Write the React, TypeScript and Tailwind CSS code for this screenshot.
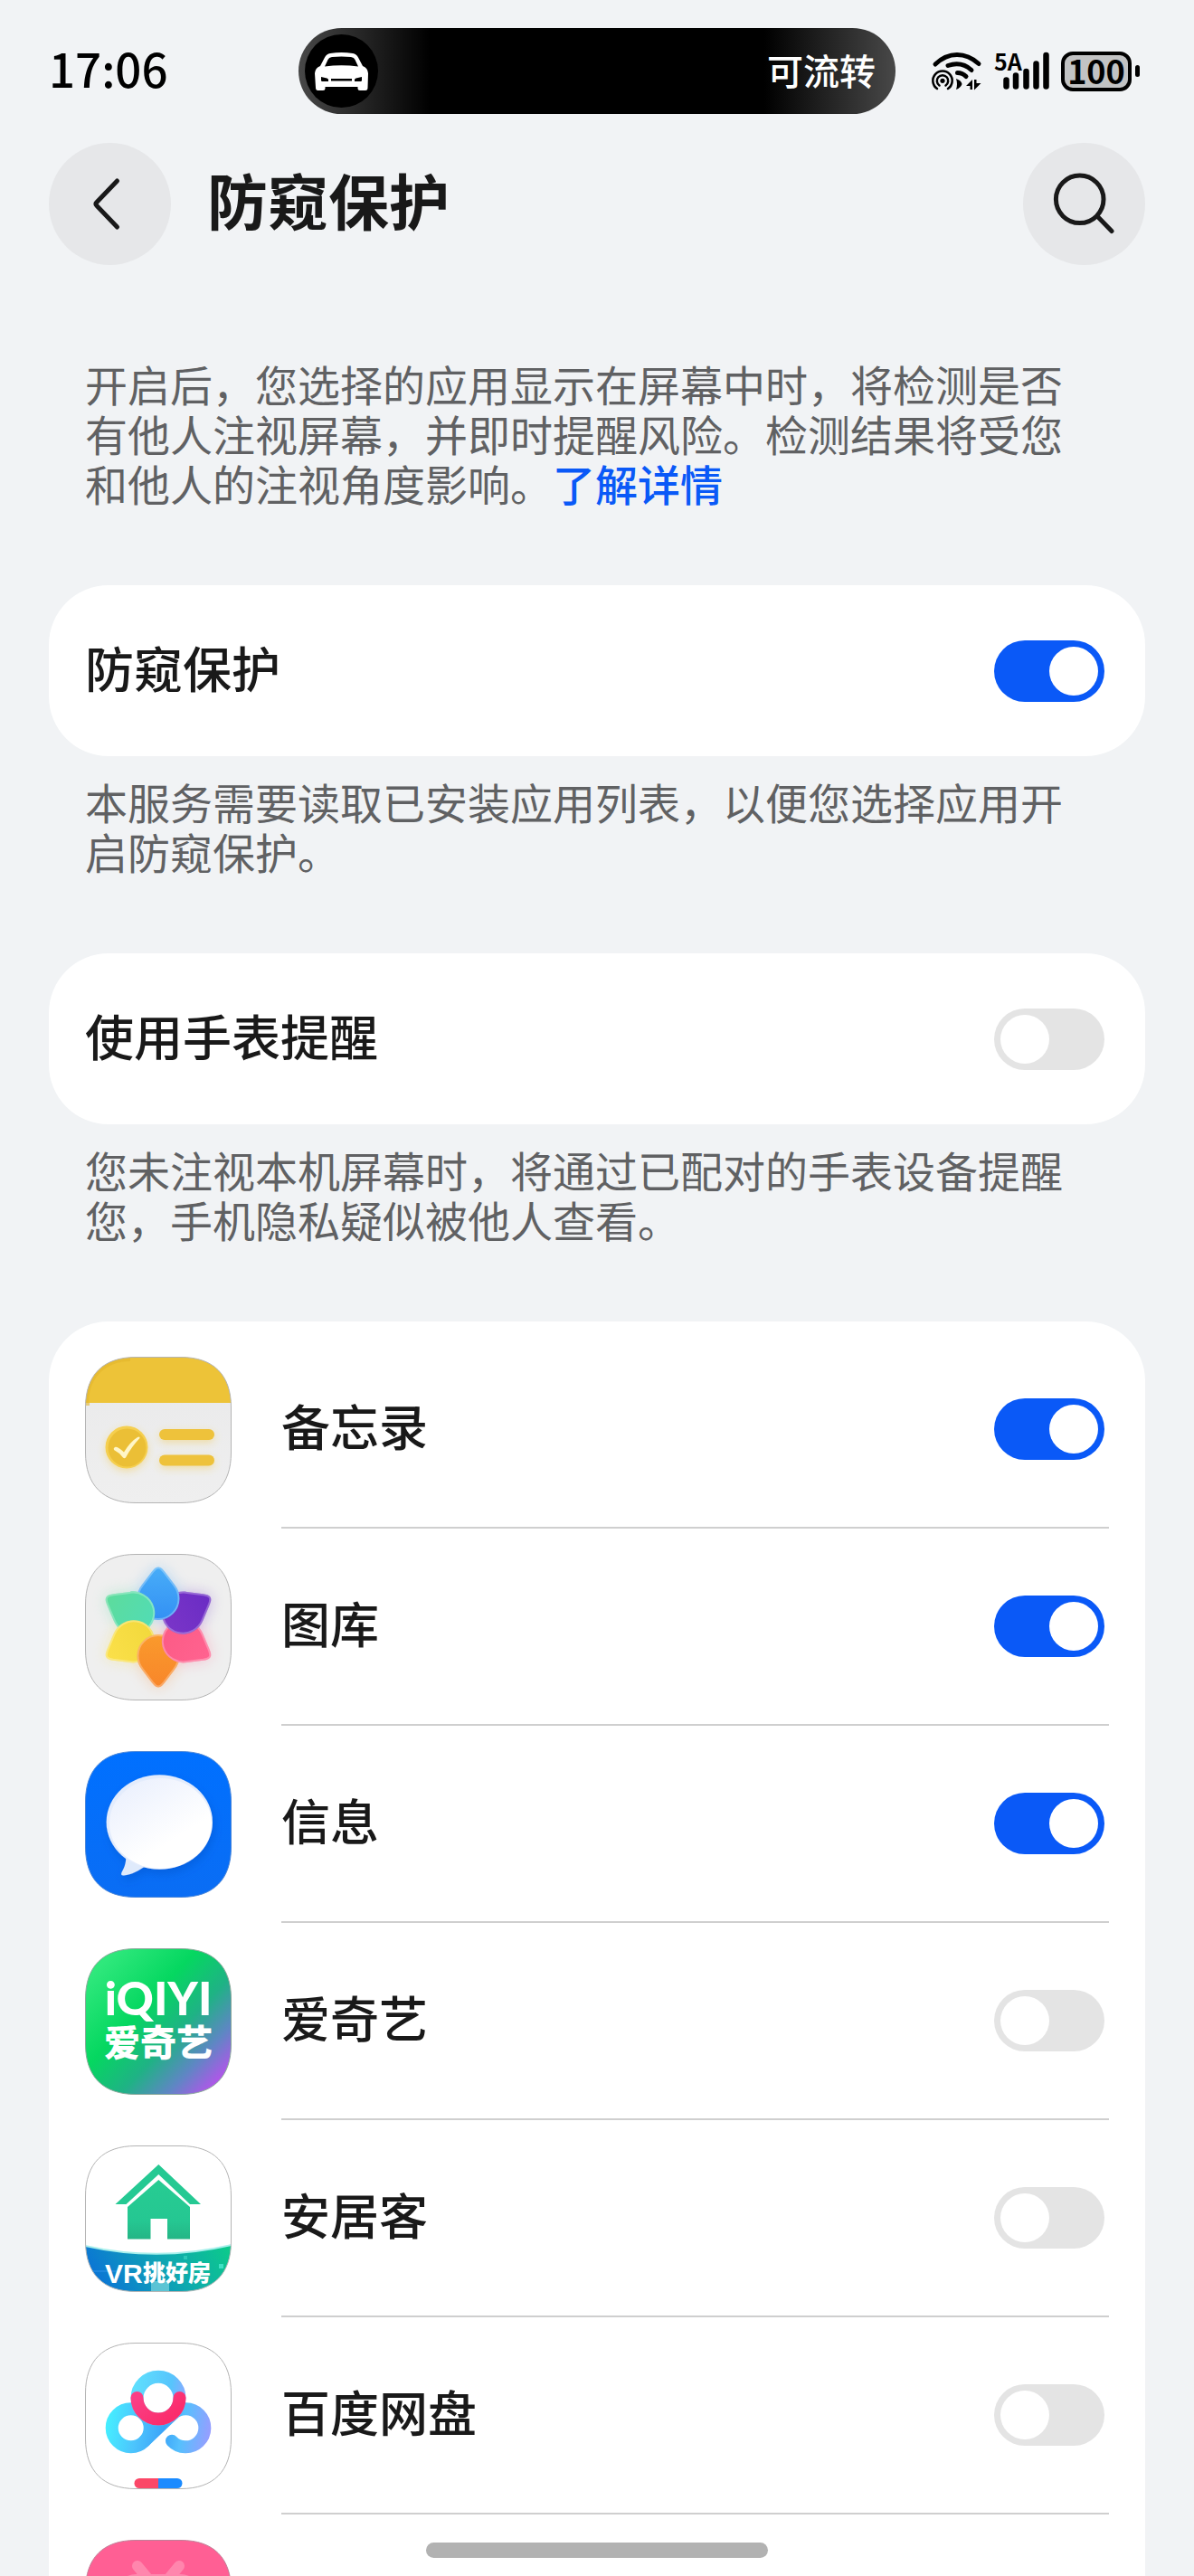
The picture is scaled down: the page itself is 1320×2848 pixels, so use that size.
import { useId, useState, type ReactNode } from "react";

const SQUIRCLE =
  "M0.5 56 C0.5 20 20 0.5 56 0.5 H106 C142 0.5 161.5 20 161.5 56 V106 C161.5 142 142 161.5 106 161.5 H56 C20 161.5 0.5 142 0.5 106 Z";
const PETAL =
  "M81 14.5 C84 14.5 86 17 88 19.5 L99 34 C103 39 104.5 44 104.5 49.5 A23.5 23.5 0 0 1 57.5 49.5 C57.5 44 59 39 63 34 L74 19.5 C76 17 78 14.5 81 14.5 Z";

function Tile({ children, edge = "#b4b4b4" }: { children: ReactNode; edge?: string }) {
  const id = useId();
  return (
    <svg viewBox="0 0 162 162" className="size-[162px] shrink-0" aria-hidden="true">
      <clipPath id={id}>
        <path d={SQUIRCLE} />
      </clipPath>
      <g clipPath={`url(#${id})`}>{children}</g>
      <path d={SQUIRCLE} fill="none" stroke={edge} />
    </svg>
  );
}

function NotesIcon() {
  return (
    <Tile>
      <defs>
        <linearGradient id="notes-paper" x1="0" y1="0" x2="0" y2="1">
          <stop offset="0" stopColor="#e9e9ea" />
          <stop offset="1" stopColor="#efefef" />
        </linearGradient>
        <filter id="notes-glow" x="-30%" y="-30%" width="160%" height="170%">
          <feDropShadow dx="0" dy="3" stdDeviation="4" floodColor="#f2c53a" floodOpacity="0.4" />
        </filter>
      </defs>
      <rect width="162" height="162" fill="url(#notes-paper)" />
      <rect width="162" height="51" fill="#edc338" />
      <path d="M3 51 V54 M2 51 C2 22 22 3 50 3" fill="none" stroke="#e3b52c" strokeWidth="4" opacity="0.6" />
      <g filter="url(#notes-glow)">
        <circle cx="46" cy="100" r="23.5" fill="#f5cf4f" />
        <rect x="82" y="80" width="61" height="12" rx="6" fill="#eec23a" />
        <rect x="82" y="108.500" width="61" height="12" rx="6" fill="#eec23a" />
      </g>
      <circle cx="46.500" cy="100.500" r="21" fill="#ebbf36" />
      <path d="M33 100 Q36 99 43 105.500 Q50 94 58 89 Q61 87.500 60.500 90 Q51 100 45 111.500 Q43.500 113 42 111.500 Q38 106 32 103 Q31 101 33 100 Z" fill="#fff6c8" />
    </Tile>
  );
}

const petals = [
  { id: "green", turn: 300, from: "#5ddc9c", to: "#52dcb4" },
  { id: "yellow", turn: 240, from: "#fbe04a", to: "#f2d93c" },
  { id: "orange", turn: 180, from: "#f8862a", to: "#fa9a2c" },
  { id: "pink", turn: 120, from: "#ff6390", to: "#fc5b86" },
  { id: "purple", turn: 60, from: "#6a2cc4", to: "#7a35c8" },
  { id: "blue", turn: 0, from: "#48adf8", to: "#3390f4" },
];

function Petal({ id, turn }: { id: string; turn: number }) {
  return (
    <g transform={`rotate(${turn} 81 81)`}>
      <path d={PETAL} fill={`url(#petal-${id})`} />
      <path d={PETAL} fill="none" stroke="#fff" strokeOpacity="0.28" strokeWidth="4" clipPath="url(#petal-clip)" />
    </g>
  );
}

function GalleryIcon() {
  return (
    <Tile>
      <defs>
        {petals.map((p) => (
          <linearGradient key={p.id} id={`petal-${p.id}`} x1="0" y1="0" x2="0" y2="1">
            <stop offset="0" stopColor={p.from} />
            <stop offset="1" stopColor={p.to} />
          </linearGradient>
        ))}
        <clipPath id="petal-clip">
          <path d={PETAL} />
        </clipPath>
        <clipPath id="petal-front">
          <rect x="50" y="30" width="45" height="43" />
        </clipPath>
        <filter id="petal-haze" x="-30%" y="-30%" width="160%" height="160%">
          <feGaussianBlur stdDeviation="8" />
        </filter>
      </defs>
      <rect width="162" height="162" fill="#efefef" />
      <g filter="url(#petal-haze)" opacity="0.35">
        {petals.map((p) => (
          <Petal key={p.id} id={p.id} turn={p.turn} />
        ))}
      </g>
      {petals.map((p) => (
        <Petal key={p.id} id={p.id} turn={p.turn} />
      ))}
      <g clipPath="url(#petal-front)">
        <Petal id="green" turn={300} />
      </g>
    </Tile>
  );
}

function MessagesIcon() {
  return (
    <Tile edge="#4a86d8">
      <defs>
        <linearGradient id="msg-bg" x1="0" y1="0" x2="0" y2="1">
          <stop offset="0" stopColor="#0070ff" />
          <stop offset="1" stopColor="#0a6df4" />
        </linearGradient>
        <linearGradient id="msg-bubble" x1="0.1" y1="0" x2="0.6" y2="0.7">
          <stop offset="0" stopColor="#e9effd" />
          <stop offset="1" stopColor="#fff" />
        </linearGradient>
        <filter id="msg-shadow" x="-20%" y="-20%" width="140%" height="150%">
          <feDropShadow dx="2" dy="5" stdDeviation="5" floodColor="#0a4fc0" floodOpacity="0.4" />
        </filter>
      </defs>
      <rect width="162" height="162" fill="url(#msg-bg)" />
      <g filter="url(#msg-shadow)">
        <path d="M45 114 C46 122 44 128 40.500 134 Q39 138 43 137.500 C51 137 60 132 68 126 Z" fill="#dfeafb" />
        <ellipse cx="82.300" cy="78.500" rx="58.700" ry="52.200" fill="#e3ecfc" />
      </g>
      <ellipse cx="83.500" cy="80" rx="56.500" ry="50" fill="url(#msg-bubble)" />
    </Tile>
  );
}

function VideoIcon() {
  return (
    <Tile edge="#8aa89a">
      <defs>
        <linearGradient id="video-bg" x1="0.1" y1="0.12" x2="0.95" y2="0.92">
          <stop offset="0" stopColor="#2fe87c" />
          <stop offset="0.35" stopColor="#05d760" />
          <stop offset="0.6" stopColor="#1fb285" />
          <stop offset="0.8" stopColor="#5f86c4" />
          <stop offset="1" stopColor="#c04df0" />
        </linearGradient>
      </defs>
      <rect width="162" height="162" fill="url(#video-bg)" />
      <text x="81" y="74" textAnchor="middle" fill="#fff" className="font-['Lato'] text-[51px] font-black">
        iQIYI
      </text>
      <text x="81" y="119" textAnchor="middle" fill="#fff" className="text-[40px] font-black">
        爱奇艺
      </text>
    </Tile>
  );
}

function HomeIcon() {
  return (
    <Tile>
      <defs>
        <linearGradient id="house" x1="0" y1="0" x2="0" y2="1">
          <stop offset="0" stopColor="#27cc92" />
          <stop offset="0.7" stopColor="#25c792" />
          <stop offset="1" stopColor="#24b585" />
        </linearGradient>
        <linearGradient id="house-band" x1="0" y1="0.4" x2="1" y2="0.2">
          <stop offset="0" stopColor="#0b74d6" />
          <stop offset="0.5" stopColor="#0fa3b4" />
          <stop offset="1" stopColor="#0cc98c" />
        </linearGradient>
      </defs>
      <rect width="162" height="162" fill="#fff" />
      <path d="M81.300 21 L128 65 H116 L81.300 32 L45.500 65 H33.500 Z" fill="#25c993" />
      <path d="M81.300 38 L116 68 V103.500 H91 V81 H72.500 V103.500 H47 V68 Z" fill="url(#house)" />
      <path d="M0 110 Q81 128 162 109 V162 H0 Z" fill="#a9f0ec" />
      <path d="M0 112 Q81 130 162 111 V162 H0 Z" fill="url(#house-band)" />
      <rect x="148" y="131" width="5" height="5" fill="#3fe0c4" />
      <rect x="109" y="122" width="4" height="4" fill="#2cc9b8" />
      <rect x="73" y="150" width="20" height="12" fill="#7cd6e0" opacity="0.7" />
      <rect x="0" y="138" width="40" height="2" fill="#2a8fe6" opacity="0.6" />
      <text x="22" y="152" fill="#fff" className="font-['Liberation_Sans'] text-[30px] font-bold">
        VR
      </text>
      <text x="64" y="150" fill="#fff" className="text-[25px] font-black">
        挑好房
      </text>
    </Tile>
  );
}

function CloudDiskIcon() {
  return (
    <Tile>
      <defs>
        <linearGradient id="disk-lower" gradientUnits="userSpaceOnUse" x1="24" y1="80" x2="140" y2="100">
          <stop offset="0" stopColor="#45f0ff" />
          <stop offset="0.3" stopColor="#4cc4fd" />
          <stop offset="0.55" stopColor="#3ba4f8" />
          <stop offset="0.72" stopColor="#55c0fd" />
          <stop offset="1" stopColor="#9a9cff" />
        </linearGradient>
        <linearGradient id="disk-upper" gradientUnits="userSpaceOnUse" x1="52" y1="50" x2="112" y2="60">
          <stop offset="0" stopColor="#5fe0fd" />
          <stop offset="0.7" stopColor="#57c4fc" />
          <stop offset="1" stopColor="#8fa8ff" />
        </linearGradient>
        <linearGradient id="disk-arc" x1="0" y1="0" x2="1" y2="0.6">
          <stop offset="0" stopColor="#fb3f86" />
          <stop offset="1" stopColor="#fb2c6c" />
        </linearGradient>
      </defs>
      <rect width="162" height="162" fill="#fff" />
      <g fill="none" strokeWidth="14" strokeLinecap="round">
        <circle cx="50.700" cy="94.300" r="21" stroke="url(#disk-lower)" />
        <path d="M96 108.700 A21 21 0 1 0 96.500 79.500 L65.500 109" stroke="url(#disk-lower)" />
        <circle cx="81" cy="61.300" r="23.500" stroke="url(#disk-upper)" />
        <path d="M57.500 61 A23.500 23.500 0 0 0 104.500 61" stroke="url(#disk-arc)" />
      </g>
      <path d="M81 150 H60 A5.500 5.500 0 0 0 60 161 H81 Z" fill="#fb4767" />
      <path d="M81 150 H102 A5.500 5.500 0 0 1 102 161 H81 Z" fill="#1b8bff" />
    </Tile>
  );
}

function TvIcon() {
  return (
    <Tile edge="#c08098">
      <rect width="162" height="162" fill="#ff5f94" />
      <path d="M58 29 L72 46 M104 29 L90 46" fill="none" stroke="#ff86ad" strokeWidth="12" strokeLinecap="round" />
      <rect x="34" y="38" width="94" height="80" rx="22" fill="#ff86ad" />
    </Tile>
  );
}

function Switch({ id, initial }: { id: string; initial: boolean }) {
  const [on, setOn] = useState(initial);
  return (
    <input
      id={id}
      type="checkbox"
      role="switch"
      checked={on}
      onChange={(e) => setOn(e.target.checked)}
      className="h-[68px] w-[122px] shrink-0 cursor-pointer appearance-none rounded-full bg-[#e4e4e4] p-[7px] before:block before:size-[54px] before:rounded-full before:bg-white checked:bg-[#0a59f7] checked:before:ml-[54px]"
    />
  );
}

function SwitchRow({ id, title, on }: { id: string; title: string; on: boolean }) {
  return (
    <>
      <label htmlFor={id} className="pb-2 text-[54px] leading-[64px] font-medium">
        {title}
      </label>
      <Switch id={id} initial={on} />
    </>
  );
}

function SwitchCard({ id, title, on }: { id: string; title: string; on: boolean }) {
  return (
    <section className="mt-[86px] mb-[22px] flex h-[189px] items-center justify-between rounded-[66px] bg-white pr-[45px] pl-10">
      <SwitchRow id={id} title={title} on={on} />
    </section>
  );
}

function Hint({ children }: { children: ReactNode }) {
  return <p className="pr-12 pl-10 text-[47px] leading-[55px] text-[#606163]">{children}</p>;
}

const apps = [
  { id: "notes", name: "备忘录", on: true, icon: <NotesIcon /> },
  { id: "gallery", name: "图库", on: true, icon: <GalleryIcon /> },
  { id: "messages", name: "信息", on: true, icon: <MessagesIcon /> },
  { id: "video", name: "爱奇艺", on: false, icon: <VideoIcon /> },
  { id: "home", name: "安居客", on: false, icon: <HomeIcon /> },
  { id: "disk", name: "百度网盘", on: false, icon: <CloudDiskIcon /> },
];

function StatusBar() {
  return (
    <div className="grid shrink-0 grid-cols-[1fr_2fr_1fr] items-center pt-[31px] text-black">
      <time className="pb-2 pl-[54px] text-[51px] leading-[60px] font-medium">17:06</time>
      <div className="flex h-[95px] items-center justify-between rounded-full bg-[linear-gradient(90deg,#484848,#000_22%,#000_78%,#484848)] pr-[22px] pl-[7px]">
        <svg viewBox="0 0 81 81" className="size-[81px]" aria-hidden="true">
          <circle cx="40.500" cy="40.500" r="40.500" fill="#000" />
          <path
            fill="#fff"
            fillRule="evenodd"
            d="M17 35 L22 25.500 Q24 21.500 28 21 Q40.500 19 53 21 Q57 21.500 59 25.500 L64 35 Q69.500 37 70 43 L69.500 59 Q69.500 62 67 62 H61 Q58.500 62 58.500 59.500 V58 H22.500 V59.500 Q22.500 62 20 62 H14.500 Q12 62 12 59 L11 43 Q11.500 37 17 35 Z M22 35.500 Q40.500 33 59 35.500 L55.500 28 Q54.500 25.500 51 25 Q40.500 24 30 25 Q26.500 25.500 25.500 28 Z M18 47 V51 Q18 52 19.500 52 H26 V50 Q26 49 24.500 48.500 Z M29 49 V51.500 H52 V49 Z M63 47 V51 Q63 52 61.500 52 H55 V50 Q55 49 56.500 48.500 Z"
          />
        </svg>
        <span className="pb-1 text-[40px] leading-[48px] font-medium text-white">可流转</span>
      </div>
      <div className="flex items-center justify-end gap-3 pr-[60px]">
        <svg viewBox="0 0 58 44" className="h-11 w-[58px]" aria-hidden="true">
          <g fill="none" stroke="#000" strokeLinecap="round">
            <path d="M5 14 Q16 3.500 29 3.500 Q42 3.500 53 13.500" strokeWidth="5" />
            <path d="M19 15.500 Q34 10.500 45 20.500" strokeWidth="5" />
            <path d="M29.500 23.500 Q35 23.500 39 27.500" strokeWidth="5" />
            <path d="M7 41 A10.700 10.700 0 1 1 19 41" strokeWidth="2.500" />
            <path d="M9.500 37.500 A6.200 6.200 0 1 1 16.500 37.500" strokeWidth="2.500" />
          </g>
          <circle cx="13" cy="32.300" r="2.600" />
          <path d="M28 30 Q34 32 34.500 36 Q33 40 28 42 Q30 36 28 30 Z" />
          <path d="M46 31 V42 H43.500 V38 H39 Z M48 31 H50.500 V35 H55.500 L48 42.500 Z" />
        </svg>
        <svg viewBox="0 0 62 44" className="h-11 w-[62px] overflow-visible">
          <text x="0" y="21" className="text-[25px] font-bold">
            5A
          </text>
          <path d="M13.500 31.500 V38.500 M24 26.500 V38.500 M35.500 22 V38.500 M46.500 13.500 V38.500 M57.500 4 V38.500" stroke="#000" strokeWidth="6.500" strokeLinecap="round" />
        </svg>
        <div className="flex items-center gap-1">
          <div className="flex h-11 w-[78px] items-center justify-center rounded-[13px] border-4 border-black bg-[#c2c3c4] pb-1 text-[36px] leading-none font-bold">
            100
          </div>
          <div className="h-[13px] w-[5px] rounded-full bg-black" />
        </div>
      </div>
    </div>
  );
}

export default function App() {
  return (
    <div lang="zh-CN" className="relative flex h-screen flex-col overflow-hidden bg-[#f1f3f5] font-['Noto_Sans_CJK_SC',sans-serif] text-[#191919]">
      <StatusBar />
      <header className="mt-8 flex shrink-0 items-center px-[54px]">
        <button type="button" aria-label="返回" className="size-[135px] rounded-full bg-[#e6e7e9]">
          <svg viewBox="0 0 135 135" fill="none" stroke="#191919" strokeWidth="5" strokeLinecap="round" strokeLinejoin="round">
            <path d="M75.500 42 L53 65.500 Q51 67.500 53 69.500 L75.500 93" />
          </svg>
        </button>
        <h1 className="ml-10 pb-3 text-[67px] leading-[80px] font-bold">防窥保护</h1>
        <button type="button" aria-label="搜索" className="ml-auto size-[135px] rounded-full bg-[#e6e7e9]">
          <svg viewBox="0 0 135 135" fill="none" stroke="#191919" strokeWidth="5" strokeLinecap="round">
            <circle cx="62.700" cy="62.300" r="26.300" />
            <path d="M82 81 L98 97.500" />
          </svg>
        </button>
      </header>
      <main className="min-h-0 flex-1 overflow-hidden px-[54px] pt-[103px]">
        <Hint>
          开启后，您选择的应用显示在屏幕中时，将检测是否有他人注视屏幕，并即时提醒风险。检测结果将受您和他人的注视角度影响。
          <a href="#details" className="font-medium text-[#0a59f7]">
            了解详情
          </a>
        </Hint>
        <SwitchCard id="protect" title="防窥保护" on />
        <Hint>本服务需要读取已安装应用列表，以便您选择应用开启防窥保护。</Hint>
        <SwitchCard id="watch" title="使用手表提醒" on={false} />
        <Hint>您未注视本机屏幕时，将通过已配对的手表设备提醒您，手机隐私疑似被他人查看。</Hint>
        <ul className="mt-[86px] rounded-t-[66px] bg-white pt-[11px] pl-10">
          {apps.map((app) => (
            <li key={app.id} className="flex items-center gap-[55px]">
              {app.icon}
              <div className="mr-10 flex h-[218px] flex-1 items-center justify-between border-b-2 border-[#cfcfcf] pr-[5px]">
                <SwitchRow id={app.id} title={app.name} on={app.on} />
              </div>
            </li>
          ))}
          <li className="flex h-[218px] items-center">
            <TvIcon />
          </li>
        </ul>
      </main>
      <div className="absolute bottom-5 left-1/2 h-[17px] w-[378px] -translate-x-1/2 rounded-full bg-[#b2b2b2]" />
    </div>
  );
}
